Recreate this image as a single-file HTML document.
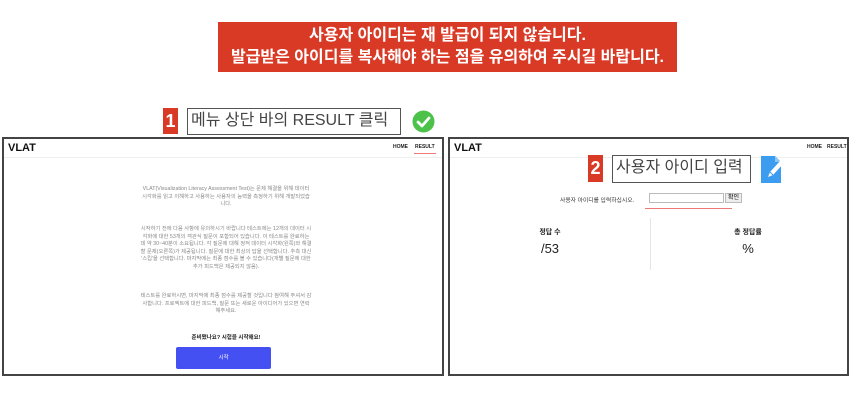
<!DOCTYPE html>
<html><head><meta charset="utf-8"><style>
*{margin:0;padding:0;box-sizing:border-box}
body{width:851px;height:400px;background:#fff;position:relative;overflow:hidden;font-family:"Liberation Sans","Noto Sans CJK KR",sans-serif}
.a{position:absolute;white-space:nowrap}
.banner{left:218px;top:22px;width:459px;height:50px;background:#d93a26;color:#fff;font-size:16px;font-weight:bold;text-align:center;line-height:22px;padding-top:3px}
.panel{border:2px solid #444;background:#fff}
.hdr{position:absolute;left:0;right:0;top:0;height:19px;border-bottom:1px solid #eee}
.vl{position:absolute;left:4px;top:3px;font-size:11px;font-weight:bold;color:#111}
.nav{position:absolute;top:5px;font-size:5px;font-weight:bold;color:#222}
.redn{background:#d93a26;color:#fff;font-weight:bold;text-align:center}
.lbl{border:1.5px solid #555;color:#444;font-size:16px;line-height:24px;padding-left:3px;background:#fff;white-space:nowrap;overflow:hidden}
.p{left:136px;width:172px;font-size:5.3px;line-height:7.6px;color:#888;text-align:center;white-space:normal}
</style></head><body>
<div class="a banner">사용자 아이디는 재 발급이 되지 않습니다.<br>발급받은 아이디를 복사해야 하는 점을 유의하여 주시길 바랍니다.</div>

<div class="a redn" style="left:163px;top:108px;width:15px;height:26px;font-size:18px;line-height:26px">1</div>
<div class="a lbl" style="left:187px;top:108px;width:214px;height:27px">메뉴 상단 바의 RESULT 클릭</div>
<svg class="a" style="left:412px;top:110px" width="23" height="23" viewBox="0 0 23 23"><circle cx="11.5" cy="11.5" r="11" fill="#4cc24a"/><path d="M6 12l4 4 7-8" stroke="#fff" stroke-width="2.8" fill="none" stroke-linecap="round" stroke-linejoin="round"/></svg>

<div class="a panel" style="left:2px;top:137px;width:442px;height:239px">
 <div class="hdr"><div class="vl">VLAT</div>
 <div class="nav" style="left:389px">HOME</div>
 <div class="nav" style="left:411px">RESULT</div>
 <div class="a" style="left:410px;top:14px;width:22px;height:1px;background:#e77"></div></div>
 <div class="a p" style="top:47px">VLAT(Visualization Literacy Assessment Test)는 문제 해결을 위해 데이터 시각화를 읽고 이해하고 사용하는 사용자의 능력을 측정하기 위해 개발되었습니다.</div>
 <div class="a p" style="top:87px">시작하기 전에 다음 사항에 유의하시기 바랍니다 테스트에는 12개의 데이터 시각화에 대한 53개의 객관식 질문이 포함되어 있습니다. 이 테스트를 완료하는 데 약 30~40분이 소요됩니다. 각 질문에 대해 정적 데이터 시각화(왼쪽)와 해결할 문제(오른쪽)가 제공됩니다. 질문에 대한 최상의 답을 선택합니다. 추측 대신 '스킵'을 선택합니다. 마지막에는 최종 점수를 볼 수 있습니다(개별 질문에 대한 추가 피드백은 제공되지 않음).</div>
 <div class="a p" style="top:154px">테스트를 완료하시면, 마지막에 최종 점수를 제공할 것입니다 참여해 주셔서 감사합니다. 프로젝트에 대한 피드백, 질문 또는 새로운 아이디어가 있으면 연락해주세요.</div>
 <div class="a" style="left:136px;width:172px;top:194px;font-size:5.5px;font-weight:bold;color:#222;text-align:center">준비됐나요? 시험을 시작해요!</div>
 <div class="a" style="left:172px;top:208px;width:95px;height:22px;background:#4450f2;border-radius:2px;color:#fff;font-size:5.5px;text-align:center;line-height:22px">시작</div>
</div>

<div class="a panel" style="left:448px;top:137px;width:401px;height:239px">
 <div class="hdr"><div class="vl">VLAT</div>
 <div class="nav" style="left:357px">HOME</div>
 <div class="nav" style="left:377px">RESULT</div></div>
 <div class="a" style="left:110px;top:56px;font-size:5.8px;color:#333">사용자 아이디를 입력하십시오.</div>
 <div class="a" style="left:199px;top:54px;width:75px;height:10px;border:1px solid #bbb"></div>
 <div class="a" style="left:275px;top:54px;width:17px;height:10px;border:1px solid #bbb;background:#eee;font-size:6px;text-align:center;line-height:8px">확인</div>
 <div class="a" style="left:195px;top:69px;width:87px;height:1px;background:#e77"></div>
 <div class="a" style="left:200px;top:79px;width:1px;height:52px;background:#e5e5e5"></div>
 <div class="a" style="left:60px;top:88px;width:80px;text-align:center;font-size:7px;font-weight:bold;color:#222">정답 수</div>
 <div class="a" style="left:60px;top:102px;width:80px;text-align:center;font-size:13px;color:#222">/53</div>
 <div class="a" style="left:258px;top:88px;width:80px;text-align:center;font-size:7px;font-weight:bold;color:#222">총 정답률</div>
 <div class="a" style="left:258px;top:102px;width:80px;text-align:center;font-size:13px;color:#222">%</div>
</div>

<div class="a redn" style="left:588px;top:155px;width:15px;height:27px;font-size:18px;line-height:27px">2</div>
<div class="a lbl" style="left:612px;top:155px;width:139px;height:28px">사용자 아이디 입력</div>
<svg class="a" style="left:761px;top:156px" width="24" height="27" viewBox="0 0 24 27"><path d="M0 0h14l6 6v21H0z" fill="#3b9cf0"/><path d="M14 0v6h6z" fill="#8cc6f7"/><path d="M7 21l2-5 11-12 3 3-11 12z" fill="#fff"/><path d="M9 16l3 3" stroke="#3b9cf0" stroke-width="1"/></svg>
</body></html>
